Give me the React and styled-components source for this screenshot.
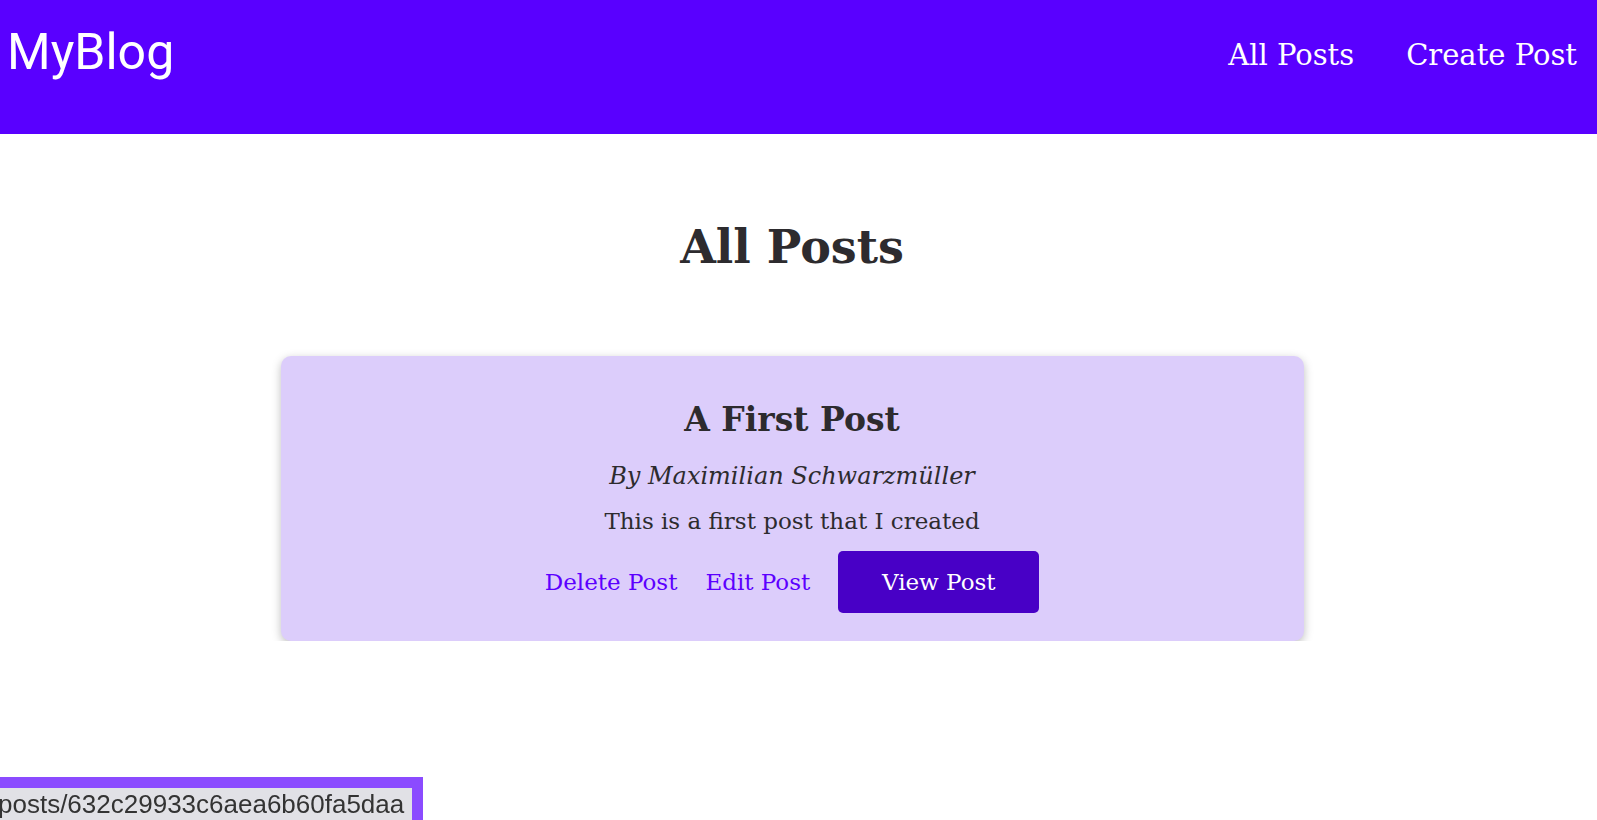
import React from "react";
import styled, { createGlobalStyle } from "styled-components";

const Global = createGlobalStyle`
  html, body { margin: 0; padding: 0; background: #ffffff; }
  body { font-family: "DejaVu Serif", "Liberation Serif", serif; color: #2d2b2e; }
  * { box-sizing: border-box; }
`;

const Header = styled.header`
  height: 134px;
  background: #5900ff;
  display: flex;
  justify-content: space-between;
  align-items: flex-start;
  padding: 0 20px 0 7px;
`;

const Logo = styled.div`
  font-family: Roboto, "Noto Sans", sans-serif;
  font-size: 50px;
  color: #ffffff;
  line-height: 1;
  margin-top: 27px;
`;

const Nav = styled.nav`
  display: flex;
  gap: 52px;
  margin-top: 41px;
`;

const NavLink = styled.a`
  font-size: 29px;
  color: #ffffff;
  text-decoration: none;
  line-height: 1;
`;

const Main = styled.main`
  display: flex;
  flex-direction: column;
  align-items: center;
  padding: 0 13px 0 0;
`;

const Title = styled.h1`
  margin: 86px 0 0;
  font-size: 46px;
  font-weight: 700;
  line-height: 1.2;
  color: #2d2b2e;
`;

const Card = styled.article`
  width: 1023px;
  margin-top: 81px;
  background: #dccdfb;
  border-radius: 10px;
  box-shadow: 0 3px 10px rgba(0, 0, 0, 0.26);
  padding: 44px 20px 28px;
  display: flex;
  flex-direction: column;
  align-items: center;
`;

const CardTitle = styled.h2`
  margin: 0;
  font-size: 33px;
  font-weight: 700;
  line-height: 1.2;
`;

const Author = styled.p`
  margin: 22px 0 0;
  font-size: 24px;
  font-style: italic;
  line-height: 1.2;
`;

const Body = styled.p`
  margin: 17px 0 0;
  font-size: 23px;
  line-height: 1.2;
`;

const Actions = styled.div`
  display: flex;
  align-items: center;
  gap: 28px;
  margin-top: 16px;
`;

const TextAction = styled.a`
  font-size: 23px;
  color: #5c00ff;
  text-decoration: none;
`;

const ViewButton = styled.button`
  width: 201px;
  height: 62px;
  border: none;
  border-radius: 5px;
  background: #4800c6;
  color: #ffffff;
  font-family: inherit;
  font-size: 23px;
`;

const StatusBubble = styled.div`
  position: fixed;
  left: 0;
  bottom: 0;
  background: #8b4bff;
  padding: 11px 11px 0 0;
`;

const StatusText = styled.div`
  background: #e1e1e6;
  color: #333;
  font-family: "Liberation Sans", Arial, sans-serif;
  font-size: 26px;
  line-height: 32px;
  height: 32px;
  padding: 0 8px 0 0;
  margin-left: -2px;
`;

export default function App() {
  return (
    <>
      <Global />
      <Header>
        <Logo>MyBlog</Logo>
        <Nav>
          <NavLink href="#">All Posts</NavLink>
          <NavLink href="#">Create Post</NavLink>
        </Nav>
      </Header>
      <Main>
        <Title>All Posts</Title>
        <Card>
          <CardTitle>A First Post</CardTitle>
          <Author>By Maximilian Schwarzmüller</Author>
          <Body>This is a first post that I created</Body>
          <Actions>
            <TextAction href="#">Delete Post</TextAction>
            <TextAction href="#">Edit Post</TextAction>
            <ViewButton>View Post</ViewButton>
          </Actions>
        </Card>
      </Main>
      <StatusBubble>
        <StatusText>posts/632c29933c6aea6b60fa5daa</StatusText>
      </StatusBubble>
    </>
  );
}
